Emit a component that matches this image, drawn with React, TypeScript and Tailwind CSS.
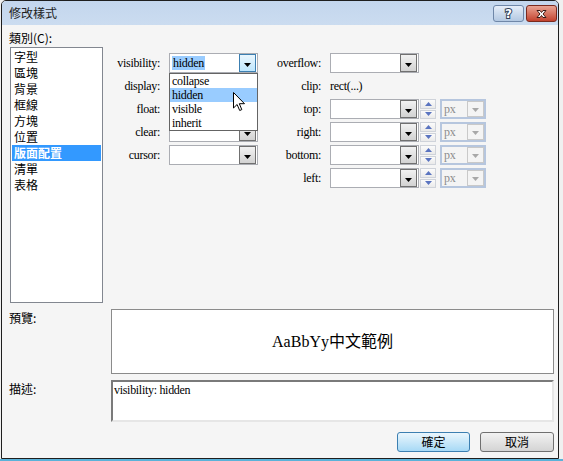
import clsx from "clsx"

const categories = ["字型", "區塊", "背景", "框線", "方塊", "位置", "版面配置", "清單", "表格"]
const visibilityOptions = ["collapse", "hidden", "visible", "inherit"]

function Triangle({ color = "#000" }: { color?: string }) {
  return (
    <svg width="7" height="4" viewBox="0 0 7 4">
      <path d="M0 0h7L3.5 4z" fill={color} />
    </svg>
  )
}

function DropButton({ focus, disabled }: { focus?: boolean; disabled?: boolean }) {
  return (
    <div
      className={clsx(
        "w-[17px] h-[18px] border flex items-center justify-center pt-[3px] shrink-0",
        focus && "border-[#3c7fb1] bg-gradient-to-b from-[#eaf6fd] to-[#bee6fd]",
        disabled && "border-[#c9c9c9] bg-[#f4f4f4]",
        !focus && !disabled && "border-[#707070] bg-gradient-to-b from-[#f2f2f2] to-[#d2d2d2]"
      )}
    >
      <Triangle color={disabled ? "#a8a8a8" : "#000"} />
    </div>
  )
}

function Select({ value, focus }: { value?: string; focus?: boolean }) {
  return (
    <div className="w-[89px] h-[20px] border border-[#abadb3] bg-white flex items-center justify-between pl-[2px] pr-px">
      {value ? (
        <span className={clsx("leading-[14px] px-px", focus && "bg-[#99ccff]")}>{value}</span>
      ) : (
        <span />
      )}
      <DropButton focus={focus} />
    </div>
  )
}

function Spinner() {
  return (
    <div className="ml-px w-[16px] h-[20px] flex flex-col gap-px">
      <div className="flex-1 border border-[#cfd3da] bg-gradient-to-b from-[#fbfbfb] to-[#eaeaea] flex items-center justify-center">
        <svg width="7" height="4" viewBox="0 0 7 4">
          <path d="M0 4h7L3.5 0z" fill="#5a74c0" />
        </svg>
      </div>
      <div className="flex-1 border border-[#cfd3da] bg-gradient-to-b from-[#fbfbfb] to-[#eaeaea] flex items-center justify-center">
        <svg width="7" height="4" viewBox="0 0 7 4">
          <path d="M0 0h7L3.5 4z" fill="#5a74c0" />
        </svg>
      </div>
    </div>
  )
}

function UnitBox() {
  return (
    <div className="w-[46px] h-[20px] border-2 border-[#b6c6de] bg-[#f4f4f4] flex items-center justify-between pl-[2px]">
      <span className="text-[#8c8c8c] leading-[14px]">px</span>
      <div className="w-[17px] h-[16px] border border-[#c9c9c9] bg-[#f4f4f4] flex items-center justify-center pt-[2px]">
        <Triangle color="#a8a8a8" />
      </div>
    </div>
  )
}

function Label({ children }: { children: React.ReactNode }) {
  return <div className="pr-[9px] text-right leading-[20px]">{children}</div>
}

function Pointer() {
  return (
    <svg className="absolute left-[63px] top-[18px]" width="12" height="20" viewBox="0 0 12 20">
      <path d="M0.5 0.5v15.5l3.6-3.5 2.6 6 2.1-0.9-2.5-5.9h5.2z" fill="#fff" stroke="#000" strokeWidth="1" strokeLinejoin="miter" />
    </svg>
  )
}

export default function App() {
  return (
    <div className="w-[563px] h-[461px] bg-[#f0f0f0] font-['Liberation_Serif','Noto_Sans_CJK_TC',serif] text-[12px] text-black">
      <div className="ml-px w-[558px] h-[459px] border border-[#1e1e1e] rounded-t-[5px] overflow-hidden flex flex-col">
        {/* title bar */}
        <div className="h-[24px] shrink-0 bg-gradient-to-b from-[#c3d6ed] to-[#cbdcf0] flex items-center pl-[7px] pr-[1px]">
          <span className="font-['Noto_Sans_CJK_TC',sans-serif] text-[12px] text-[#1d1d1d] flex-1">修改樣式</span>
          <div className="flex gap-[2px] mt-[1px]">
            <div className="w-[31px] h-[17px] rounded-[3px] border border-[#6f87a8] bg-gradient-to-b from-[#e6eef8] to-[#b3c8e2] flex items-center justify-center">
              <span className="font-['DejaVu_Sans',sans-serif] font-bold text-[12px] leading-none text-white [-webkit-text-stroke:2px_#2f3f57] [paint-order:stroke]">?</span>
            </div>
            <div className="w-[31px] h-[17px] rounded-[3px] border border-[#7a2a1e] bg-gradient-to-b from-[#e8a393] to-[#c2412d] flex items-center justify-center">
              <svg width="13" height="10" viewBox="0 0 13 10">
                <path d="M2 1.5h3l1.5 2 1.5-2h3l-3 3.5 3 3.5h-3l-1.5-2-1.5 2h-3l3-3.5z" fill="#fff" stroke="#3b1a14" strokeWidth="1" strokeLinejoin="round" />
              </svg>
            </div>
          </div>
        </div>

        {/* body */}
        <div className="flex-1 bg-[#f5f5f5] flex flex-col pl-[7px] pr-[4px]">
          <div className="h-[278px] flex">
            <div className="w-[94px] flex flex-col">
              <div className="h-[22px] pt-[5px] leading-[16px] font-['Noto_Sans_CJK_TC',sans-serif]">類別(C):</div>
              <div className="ml-px w-[93px] h-[256px] border border-[#828790] bg-white pt-px px-px font-['Noto_Sans_CJK_TC',sans-serif]">
                {categories.map(c => (
                  <div
                    key={c}
                    className={clsx("h-[16px] leading-[16px] pl-[2px]", c === "版面配置" && "bg-[#3399ff] text-white font-bold")}
                  >
                    {c}
                  </div>
                ))}
              </div>
            </div>

            <div className="pt-[28px] tracking-[-0.3px]">
              <div className="grid grid-cols-[66px_89px_72px_89px_21px_46px] auto-rows-[20px] gap-y-[3px]">
                <Label>visibility:</Label>
                <div className="relative z-10">
                  <Select value="hidden" focus />
                  <div className="absolute left-0 top-[20px] w-[89px] h-[58px] border border-[#646464] bg-white">
                    {visibilityOptions.map(o => (
                      <div key={o} className={clsx("h-[14px] leading-[14px] pl-[2px]", o === "hidden" && "bg-[#99ccff]")}>
                        {o}
                      </div>
                    ))}
                    <Pointer />
                  </div>
                </div>
                <Label>overflow:</Label>
                <Select />
                <div />
                <div />

                <Label>display:</Label>
                <Select />
                <Label>clip:</Label>
                <div className="leading-[20px]">rect(...)</div>
                <div />
                <div />

                <Label>float:</Label>
                <Select />
                <Label>top:</Label>
                <Select />
                <Spinner />
                <UnitBox />

                <Label>clear:</Label>
                <Select />
                <Label>right:</Label>
                <Select />
                <Spinner />
                <UnitBox />

                <Label>cursor:</Label>
                <Select />
                <Label>bottom:</Label>
                <Select />
                <Spinner />
                <UnitBox />

                <div />
                <div />
                <Label>left:</Label>
                <Select />
                <Spinner />
                <UnitBox />
              </div>
            </div>
          </div>

          <div className="mt-[6px] flex">
            <div className="w-[102px] leading-[14px] pt-[2px] font-['Noto_Sans_CJK_TC',sans-serif]">預覽:</div>
            <div className="w-[443px] h-[65px] border border-[#8b8b8b] bg-white flex items-center justify-center">
              <span className="text-[16px]">AaBbYy中文範例</span>
            </div>
          </div>

          <div className="mt-[6px] flex">
            <div className="w-[102px] leading-[14px] pt-[2px] font-['Noto_Sans_CJK_TC',sans-serif]">描述:</div>
            <div className="w-[443px] h-[42px] border-2 border-t-[#7a7a7a] border-l-[#7a7a7a] border-b-[#e6e6e6] border-r-[#e6e6e6] bg-white pl-px pt-px leading-[14px] tracking-[-0.3px]">
              visibility: hidden
            </div>
          </div>

          <div className="mt-[10px] flex justify-end gap-[10px]">
            <button className="w-[73px] h-[20px] rounded-[3px] border border-[#3c7fb1] bg-gradient-to-b from-[#eaf6fd] to-[#a7d9f5] font-['Noto_Sans_CJK_TC',sans-serif] text-[12px] leading-none">
              確定
            </button>
            <button className="w-[74px] h-[20px] rounded-[3px] border border-[#707070] bg-gradient-to-b from-[#f2f2f2] to-[#d4d4d4] font-['Noto_Sans_CJK_TC',sans-serif] text-[12px] leading-none">
              取消
            </button>
          </div>
        </div>
      </div>
      <div className="h-[2px] bg-[#5ab2d9]" />
    </div>
  )
}
